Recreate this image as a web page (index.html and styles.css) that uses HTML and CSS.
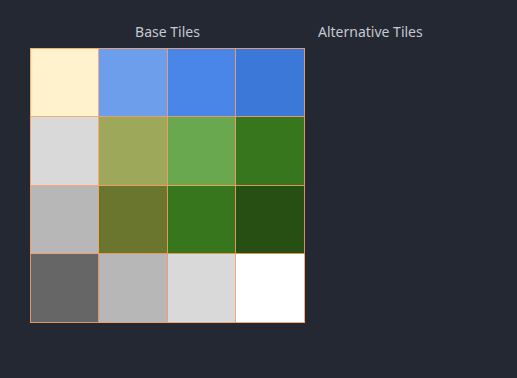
FILE: index.html
```
<!DOCTYPE html>
<html lang="en">
<head>
    <meta charset="UTF-8">
    <title>Tile Atlas</title>
    <link rel="stylesheet" href="styles.css">
</head>
<body>
    <div class="atlas-panel">
        <div class="base-column">
            <div class="title base-title">Base Tiles</div>
            <div class="tile-grid">
                <div class="tile cream"></div>
                <div class="tile blue-light"></div>
                <div class="tile blue"></div>
                <div class="tile blue-dark"></div>
                <div class="tile gray-light"></div>
                <div class="tile olive-light"></div>
                <div class="tile green-light"></div>
                <div class="tile green"></div>
                <div class="tile gray"></div>
                <div class="tile olive"></div>
                <div class="tile green"></div>
                <div class="tile green-dark"></div>
                <div class="tile gray-dark"></div>
                <div class="tile gray"></div>
                <div class="tile gray-light"></div>
                <div class="tile white"></div>
            </div>
        </div>
        <div class="alt-column">
            <div class="title">Alternative Tiles</div>
        </div>
    </div>
</body>
</html>
```

FILE: styles.css
```
* {
    box-sizing: border-box;
}

body {
    margin: 0;
    height: 100vh;
    background-color: #232832;
    font-family: 'Noto Sans', sans-serif;
    color: #c6c9cf;
}

.atlas-panel {
    display: flex;
    padding: 22px 0 0 30px;
}

.base-column {
    width: 275px;
}

.title {
    font-size: 14px;
    line-height: 20px;
    height: 20px;
}

.base-title {
    text-align: center;
    margin-bottom: 6px;
}

.alt-column {
    margin-left: 13px;
}

.tile-grid {
    display: grid;
    grid-template-columns: repeat(4, 1fr);
    grid-template-rows: repeat(4, 1fr);
    width: 275px;
    height: 275px;
}

.tile {
    border-right: 1px solid rgba(250, 158, 100, 0.85);
    border-bottom: 1px solid rgba(250, 158, 100, 0.85);
}

.tile:nth-child(4n + 1) {
    border-left: 1px solid rgba(250, 158, 100, 0.85);
}

.tile:nth-child(-n + 4) {
    border-top: 1px solid rgba(250, 158, 100, 0.85);
}

.cream { background-color: #fff2cc; }
.blue-light { background-color: #6d9eeb; }
.blue { background-color: #4a86e8; }
.blue-dark { background-color: #3c78d8; }
.gray-light { background-color: #d9d9d9; }
.olive-light { background-color: #9ea85a; }
.green-light { background-color: #6aa84f; }
.green { background-color: #38761d; }
.gray { background-color: #b7b7b7; }
.olive { background-color: #6a752e; }
.green-dark { background-color: #274e13; }
.gray-dark { background-color: #666666; }
.white { background-color: #ffffff; }
```
